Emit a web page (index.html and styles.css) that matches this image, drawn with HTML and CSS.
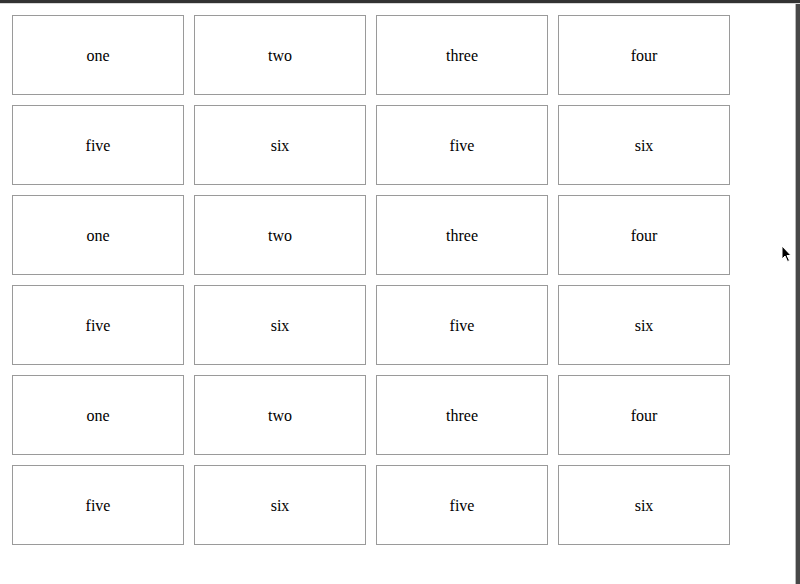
FILE: index.html
```html
<!DOCTYPE html>
<html>
<head>
<meta charset="utf-8">
<link rel="stylesheet" href="styles.css">
</head>
<body>
<div class="topbar"></div>
<div class="frame">
  <main class="page">
    <div class="grid">
      <div class="cell">one</div><div class="cell">two</div><div class="cell">three</div><div class="cell">four</div>
      <div class="cell">five</div><div class="cell">six</div><div class="cell">five</div><div class="cell">six</div>
      <div class="cell">one</div><div class="cell">two</div><div class="cell">three</div><div class="cell">four</div>
      <div class="cell">five</div><div class="cell">six</div><div class="cell">five</div><div class="cell">six</div>
      <div class="cell">one</div><div class="cell">two</div><div class="cell">three</div><div class="cell">four</div>
      <div class="cell">five</div><div class="cell">six</div><div class="cell">five</div><div class="cell">six</div>
    </div>
  </main>
  <div class="sidebar"></div>
</div>
<svg class="cursor" width="12" height="18" viewBox="0 0 12 18">
  <path d="M1 1 L1 14 L4 11 L6.5 16.5 L8.5 15.5 L6 10.5 L10 10.5 Z" fill="#000" stroke="#fff" stroke-width="1"/>
</svg>
</body>
</html>
```

FILE: styles.css
```css
html, body {
  margin: 0;
  padding: 0;
  background: #fff;
  width: 800px;
  height: 584px;
  overflow: hidden;
}
body {
  font-family: "Liberation Serif", "Times New Roman", serif;
  font-size: 16px;
  color: #000;
  position: relative;
}
.topbar {
  height: 3px;
  background: #333;
  border-bottom: 1px solid #d8d8d8;
}
.frame {
  display: flex;
  height: 580px;
}
.page {
  flex: 1;
  padding: 11px 0 0 12px;
}
.sidebar {
  width: 4px;
  background: #484848;
  border-left: 1px solid #b8b8b8;
}
.grid {
  display: grid;
  grid-template-columns: repeat(4, 172px);
  grid-auto-rows: 80px;
  gap: 10px;
}
.cell {
  box-sizing: border-box;
  border: 1px solid #9a9a9a;
  padding-top: 1px;
  display: flex;
  align-items: center;
  justify-content: center;
}
.cursor {
  position: absolute;
  left: 781px;
  top: 245px;
}
```
